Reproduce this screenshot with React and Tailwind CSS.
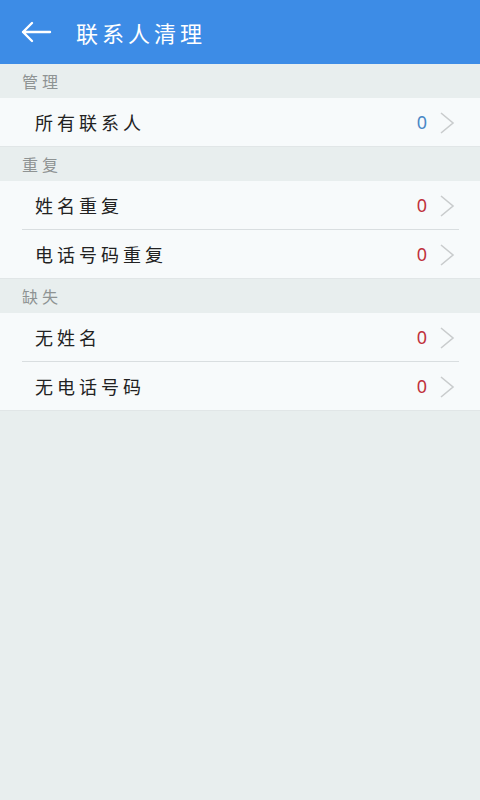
const sections = [
  { title: '管理', rows: [{ label: '所有联系人', count: 0, tone: 'blue' }] },
  {
    title: '重复',
    rows: [
      { label: '姓名重复', count: 0, tone: 'red' },
      { label: '电话号码重复', count: 0, tone: 'red' },
    ],
  },
  {
    title: '缺失',
    rows: [
      { label: '无姓名', count: 0, tone: 'red' },
      { label: '无电话号码', count: 0, tone: 'red' },
    ],
  },
]

function Chevron() {
  return (
    <svg width="16" height="24" viewBox="0 0 16 24" fill="none" className="ml-[12px]">
      <path d="M2 2 L14 12 L2 22" stroke="#c9cccd" strokeWidth="1.6" strokeLinejoin="miter" />
    </svg>
  )
}

function Row({ label, count, tone, last }) {
  return (
    <div className="relative flex h-[49px] items-center pl-[35px] pr-[25px]">
      <div className="flex-1 text-[18px] tracking-[4px] text-[#222]">{label}</div>
      <div
        className={
          tone === 'blue'
            ? 'text-[18px] text-[#4a88c6] font-["Noto_Sans"]'
            : 'text-[18px] text-[#c0313b] font-["Noto_Sans"]'
        }
      >
        {count}
      </div>
      <Chevron />
      {!last ? <div className="absolute bottom-0 left-[22px] right-[21px] h-px bg-[#d9dee0]" /> : null}
    </div>
  )
}

export default function App() {
  return (
    <div className='min-h-[800px] w-[480px] bg-[#e8eeee] font-["Noto_Sans_CJK_SC","Noto_Sans",sans-serif]'>
      <div className="flex h-[64px] items-center bg-[#3d8ce6] pl-[20px]">
        <svg width="32" height="22" viewBox="0 0 32 22" fill="none">
          <path d="M30 11 H3 M12 2 L3 11 L12 20" stroke="#fff" strokeWidth="2.4" strokeLinecap="round" strokeLinejoin="round" />
        </svg>
        <div className="ml-[24px] text-[22px] tracking-[4px] text-white">联系人清理</div>
      </div>
      {sections.map((s) => (
        <div key={s.title}>
          <div className="flex h-[34px] items-center pl-[22px] text-[16px] tracking-[4px] text-[#8e9393]">
            {s.title}
          </div>
          <div className="bg-[#f7fafb] shadow-[inset_0_-1px_0_#e1e6e7]">
            {s.rows.map((r, i) => (
              <Row key={r.label} {...r} last={i === s.rows.length - 1} />
            ))}
          </div>
        </div>
      ))}
    </div>
  )
}
